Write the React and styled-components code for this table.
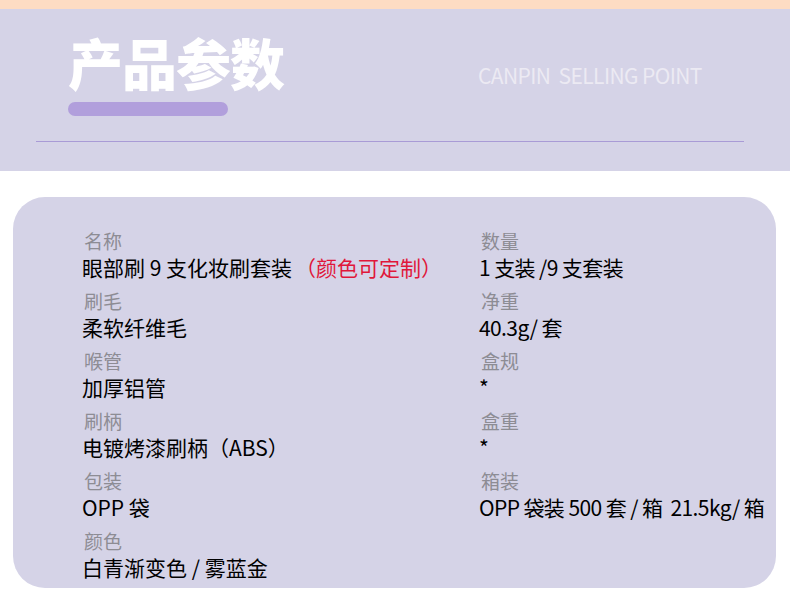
import React from "react";
import styled, { createGlobalStyle } from "styled-components";

const Global = createGlobalStyle`
  html, body { margin: 0; padding: 0; background: #ffffff; }
  body { width: 790px; height: 606px; overflow: hidden; font-family: "Noto Sans CJK SC", "Noto Sans", sans-serif; }
`;

const Page = styled.div`
  width: 790px;
  height: 606px;
  background: #ffffff;
  display: flex;
  flex-direction: column;
`;

const Header = styled.header`
  height: 162px;
  border-top: 9px solid #fddcc3;
  background: #d5d3e7;
  display: flex;
  flex-direction: column;
`;

const TitleRow = styled.div`
  display: flex;
  align-items: flex-start;
  padding: 19px 0 0 68px;
  height: 110px;
  box-sizing: border-box;
`;

const TitleBlock = styled.div`
  display: flex;
  flex-direction: column;
  width: 410px;
`;

const Title = styled.h1`
  margin: 0;
  font-family: "Noto Sans CJK SC", sans-serif;
  font-weight: 900;
  font-size: 55px;
  line-height: 66px;
  letter-spacing: -1px;
  color: #ffffff;
`;

const Pill = styled.div`
  width: 160px;
  height: 14px;
  border-radius: 7px;
  background: #b19fdc;
  margin-top: 8px;
`;

const Subtitle = styled.div`
  margin-top: 35px;
  font-family: "Noto Sans CJK SC", "Noto Sans", sans-serif;
  font-weight: 400;
  font-size: 21px;
  line-height: 24px;
  letter-spacing: -0.6px;
  color: #eceaf3;
  white-space: pre;
`;

const Rule = styled.div`
  height: 1px;
  margin: 22px 46px 0 36px;
  background: #a99bd6;
`;

const Card = styled.section`
  margin: 26px 14px 0 13px;
  height: 391px;
  border-radius: 32px;
  background: #d5d3e7;
  display: grid;
  grid-template-columns: 397px 1fr;
  padding: 31px 0 0 69px;
  box-sizing: border-box;
`;

const Column = styled.div`
  display: flex;
  flex-direction: column;
  letter-spacing: ${(p) => p.$tracking || "0px"};
`;

const Item = styled.div`
  display: flex;
  flex-direction: column;
  margin-bottom: 8px;
`;

const Label = styled.div`
  font-size: 19px;
  line-height: 26px;
  color: #8d8c94;
  padding-left: 2px;
  letter-spacing: 0;
`;

const Value = styled.div`
  font-size: 21px;
  font-weight: 400;
  line-height: 26px;
  color: #000000;
  white-space: pre;
`;

const Red = styled.span`
  color: #e0173a;
  margin-left: 3px;
`;

const left = [
  ["名称", <>眼部刷 9 支化妆刷套装<Red>（颜色可定制）</Red></>],
  ["刷毛", "柔软纤维毛"],
  ["喉管", "加厚铝管"],
  ["刷柄", "电镀烤漆刷柄（ABS）"],
  ["包装", "OPP 袋"],
  ["颜色", "白青渐变色 / 雾蓝金"],
];

const right = [
  ["数量", "1 支装 /9 支套装"],
  ["净重", "40.3g/ 套"],
  ["盒规", "*"],
  ["盒重", "*"],
  ["箱装", "OPP 袋装 500 套 / 箱  21.5kg/ 箱"],
];

export default function App() {
  return (
    <Page>
      <Global />
      <Header>
        <TitleRow>
          <TitleBlock>
            <Title>产品参数</Title>
            <Pill />
          </TitleBlock>
          <Subtitle>CANPIN  SELLING POINT</Subtitle>
        </TitleRow>
        <Rule />
      </Header>
      <Card>
        <Column>
          {left.map(([l, v]) => (
            <Item key={l}>
              <Label>{l}</Label>
              <Value>{v}</Value>
            </Item>
          ))}
        </Column>
        <Column $tracking="-0.6px">
          {right.map(([l, v]) => (
            <Item key={l}>
              <Label>{l}</Label>
              <Value>{v}</Value>
            </Item>
          ))}
        </Column>
      </Card>
    </Page>
  );
}
